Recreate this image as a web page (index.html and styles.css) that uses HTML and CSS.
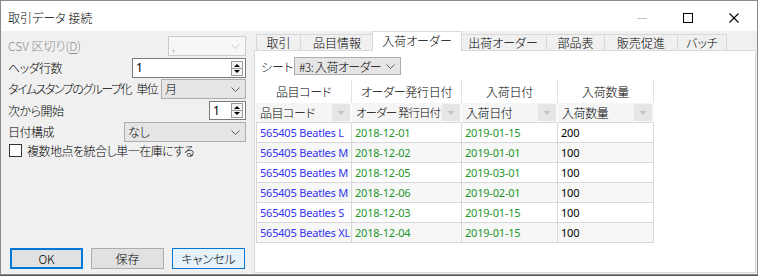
FILE: index.html
```html
<!DOCTYPE html>
<html lang="ja">
<head>
<meta charset="utf-8">
<title>取引データ 接続</title>
<link rel="stylesheet" href="styles.css">
</head>
<body>
<div class="window">
  <div class="titlebar">
    <span class="title">取引データ 接続</span>
    <div class="controls">
      <div class="ctl"><svg width="10" height="10" viewBox="0 0 10 10"><line x1="0" y1="5.5" x2="10" y2="5.5" stroke="#c4c4c4" stroke-width="1"/></svg></div>
      <div class="ctl"><svg width="10" height="10" viewBox="0 0 10 10"><rect x="0.5" y="0.5" width="9" height="9" fill="none" stroke="#000" stroke-width="1"/></svg></div>
      <div class="ctl"><svg width="10" height="10" viewBox="0 0 10 10"><path d="M0.5 0.5 L9.5 9.5 M9.5 0.5 L0.5 9.5" stroke="#000" stroke-width="1.1" fill="none"/></svg></div>
    </div>
  </div>
  <div class="body">
    <div class="left">
      <div class="form">
        <div class="row">
          <span class="label disabled">CSV 区切り(<u>D</u>)</span>
          <div class="combo combo-disabled w-csv"><span class="cval">,</span><svg class="chev" width="9" height="5" viewBox="0 0 9 5"><polyline points="0.5,0.5 4.5,4.5 8.5,0.5" fill="none" stroke="#c6c6c6"/></svg></div>
        </div>
        <div class="row">
          <span class="label">ヘッダ行数</span>
          <div class="spin w-head"><span class="sval">1</span><svg class="spinbtn" width="12" height="15" viewBox="0 0 12 15"><rect x="0.5" y="0.5" width="11" height="14" fill="#f4f4f4" stroke="#9a9a9a"/><line x1="0.5" y1="7.5" x2="11.5" y2="7.5" stroke="#9a9a9a"/><polygon points="3,6 9,6 6,3" fill="#000"/><polygon points="3,9 9,9 6,12" fill="#000"/></svg></div>
        </div>
        <div class="row r3">
          <span class="label tight">タイムスタンプのグループ化 単位</span>
          <div class="combo w-unit"><span class="cval">月</span><svg class="chev" width="9" height="5" viewBox="0 0 9 5"><polyline points="0.5,0.5 4.5,4.5 8.5,0.5" fill="none" stroke="#606060"/></svg></div>
        </div>
        <div class="row r4">
          <span class="label">次から開始</span>
          <div class="spin w-start"><span class="sval">1</span><svg class="spinbtn" width="12" height="15" viewBox="0 0 12 15"><rect x="0.5" y="0.5" width="11" height="14" fill="#f4f4f4" stroke="#9a9a9a"/><line x1="0.5" y1="7.5" x2="11.5" y2="7.5" stroke="#9a9a9a"/><polygon points="3,6 9,6 6,3" fill="#000"/><polygon points="3,9 9,9 6,12" fill="#000"/></svg></div>
        </div>
        <div class="row">
          <span class="label">日付構成</span>
          <div class="combo w-date"><span class="cval">なし</span><svg class="chev" width="9" height="5" viewBox="0 0 9 5"><polyline points="0.5,0.5 4.5,4.5 8.5,0.5" fill="none" stroke="#606060"/></svg></div>
        </div>
        <div class="row r6">
          <span class="checkbox"></span>
          <span class="label">複数地点を統合し単一在庫にする</span>
        </div>
      </div>
      <div class="buttons">
        <div class="btn btn-default">OK</div>
        <div class="btn">保存</div>
        <div class="btn btn-hover">キャンセル</div>
      </div>
    </div>
    <div class="right">
      <div class="tabs">
        <div class="tab first t1">取引</div>
        <div class="tab t2">品目情報</div>
        <div class="tab selected t3">入荷オーダー</div>
        <div class="tab t4">出荷オーダー</div>
        <div class="tab t5">部品表</div>
        <div class="tab t6">販売促進</div>
        <div class="tab t7">バッチ</div>
      </div>
      <div class="panel">
        <div class="sheet-row">
          <span class="sheet-label">シート</span>
          <div class="combo w-sheet"><span class="cval">#3: 入荷オーダー</span><svg class="chev" width="9" height="5" viewBox="0 0 9 5"><polyline points="0.5,0.5 4.5,4.5 8.5,0.5" fill="none" stroke="#606060"/></svg></div>
        </div>
        <div class="grid">
          <div class="gh">品目コード</div>
          <div class="gh">オーダー発行日付</div>
          <div class="gh">入荷日付</div>
          <div class="gh">入荷数量</div>

          <div class="fh"><span class="ftext">品目コード</span><span class="farrow"></span></div>
          <div class="fh"><span class="ftext ftight">オーダー 発行日付</span><span class="farrow"></span></div>
          <div class="fh"><span class="ftext">入荷日付</span><span class="farrow"></span></div>
          <div class="fh"><span class="ftext">入荷数量</span><span class="farrow"></span></div>

          <div class="c c1">565405 Beatles L</div><div class="c c2">2018-12-01</div><div class="c c3">2019-01-15</div><div class="c c4">200</div>
          <div class="c c1 alt">565405 Beatles M</div><div class="c c2 alt">2018-12-02</div><div class="c c3 alt">2019-01-01</div><div class="c c4 alt">100</div>
          <div class="c c1">565405 Beatles M</div><div class="c c2">2018-12-05</div><div class="c c3">2019-03-01</div><div class="c c4">100</div>
          <div class="c c1 alt">565405 Beatles M</div><div class="c c2 alt">2018-12-06</div><div class="c c3 alt">2019-02-01</div><div class="c c4 alt">100</div>
          <div class="c c1">565405 Beatles S</div><div class="c c2">2018-12-03</div><div class="c c3">2019-01-15</div><div class="c c4">100</div>
          <div class="c c1 alt">565405 Beatles XL</div><div class="c c2 alt">2018-12-04</div><div class="c c3 alt">2019-01-15</div><div class="c c4 alt">100</div>
        </div>
      </div>
    </div>
  </div>
</div>
</body>
</html>
```

FILE: styles.css
```css
* { box-sizing: border-box; }

body {
  margin: 0;
  background: #5e5048;
}

.window {
  width: 758px;
  height: 275px;
  border: 1px solid #8a8a8a;
  background: #f0f0f0;
  display: flex;
  flex-direction: column;
  font-family: "Noto Sans CJK JP", sans-serif;
  font-size: 12px;
  font-weight: 300;
  font-feature-settings: "palt";
  color: #000;
  overflow: hidden;
}

/* Title bar */
.titlebar {
  height: 30px;
  flex: none;
  background: #fff;
  display: flex;
  align-items: center;
  padding-left: 7px;
}
.title {
  padding-top: 2px;
}
.controls {
  margin-left: auto;
  display: flex;
  height: 100%;
}
.ctl {
  width: 46px;
  display: flex;
  align-items: center;
  justify-content: center;
  padding-top: 4px;
}

/* Body */
.body {
  flex: 1;
  display: flex;
  min-height: 0;
}

.left {
  width: 253px;
  flex: none;
  display: flex;
  flex-direction: column;
  padding: 5px 8px 5px 7px;
}

.form {
  display: flex;
  flex-direction: column;
}
.row {
  display: flex;
  align-items: center;
  height: 20px;
  line-height: 16px;
}
.row + .row { margin-top: 2px; }
.row.r3 { margin-top: 1px; }
.row.r4 { height: 19px; }
.row.r6 { height: 13px; }

.label {
  flex: 1;
  white-space: nowrap;
  letter-spacing: -0.5px;
}
.label.tight { letter-spacing: -1.5px; word-spacing: 4px; }
.label.disabled { color: #8d8d8d; letter-spacing: 0; }
.label u { text-decoration-thickness: 1px; text-underline-offset: 2px; }

.combo {
  height: 100%;
  display: flex;
  align-items: center;
  border: 1px solid #adadad;
  background: #e5e5e5;
  padding: 0 5px 0 3px;
  flex: none;
}
.combo .cval { flex: 1; white-space: nowrap; overflow: hidden; }
.combo-disabled {
  border-color: #cccccc;
  background: #f7f7f7;
  color: #9a9a9a;
}
.w-csv { width: 78px; }
.w-unit { width: 85px; }
.w-date { width: 122px; }
.w-sheet { width: 107px; height: 18px; padding-left: 4px; }
.w-sheet .cval { letter-spacing: -0.6px; }

.spin {
  height: 100%;
  display: flex;
  align-items: center;
  border: 1px solid #7a7a7a;
  background: #fff;
  padding: 0 2px 0 3px;
  flex: none;
}
.spin .sval { flex: 1; font-family: "Noto Sans", sans-serif; font-weight: 400; }
.w-head { width: 114px; }
.w-start { width: 37px; }

.checkbox {
  width: 13px;
  height: 13px;
  border: 1px solid #333;
  background: #fff;
  margin: 0 5px 0 1px;
  flex: none;
}

.buttons {
  margin-top: auto;
  display: flex;
  gap: 8px;
  padding-left: 2px;
}
.btn {
  width: 73px;
  height: 21px;
  border: 1px solid #adadad;
  background: #e1e1e1;
  display: flex;
  align-items: center;
  justify-content: center;
}
.btn-default { border: 2px solid #0078d7; }
.btn-hover { border-color: #0078d7; background: #e5f1fb; }

/* Right side */
.right {
  flex: 1;
  display: flex;
  flex-direction: column;
  padding: 0 1px 1px 0;
}
.tabs {
  height: 20px;
  flex: none;
  display: flex;
  align-items: flex-end;
  padding-left: 2px;
}
.tab {
  height: 17px;
  border: 1px solid #d9d9d9;
  border-left: none;
  border-bottom: none;
  background: #f0f0f0;
  display: flex;
  align-items: center;
  justify-content: center;
  white-space: nowrap;
  padding-bottom: 1px;
}
.tab.first { border-left: 1px solid #d9d9d9; }
.tab.selected {
  height: 20px;
  background: #fff;
  border-left: 1px solid #d9d9d9;
  margin: 0 -2px;
  position: relative;
  z-index: 1;
  padding-bottom: 2px;
}
.t1 { width: 45px; }
.t2 { width: 73px; }
.t3 { width: 90px; }
.t4 { width: 87px; }
.t5 { width: 58px; }
.t6 { width: 73px; }
.t7 { width: 49px; }

.panel {
  flex: 1;
  margin-top: -1px;
  border: 1px solid #d9d9d9;
  background: #fff;
  padding: 6px 0 0 1px;
}
.sheet-row {
  display: flex;
  align-items: center;
  padding-left: 5px;
}
.sheet-label {
  width: 33px;
}

/* Grid */
.grid {
  margin-top: 5px;
  display: grid;
  grid-template-columns: 96px 110px 96px 96px;
  width: 398px;
}
.gh {
  height: 23px;
  display: flex;
  align-items: center;
  justify-content: center;
  border-right: 1px solid #e3e3e3;
  padding-bottom: 1px;
  letter-spacing: -0.3px;
}
.fh {
  height: 20px;
  display: flex;
  align-items: center;
  background: #f5f5f5;
  border-right: 1px solid #fff;
  border-bottom: 1px solid #d9d9d9;
  padding: 0 1px 1px 4px;
}
.ftext { flex: 1; white-space: nowrap; letter-spacing: -0.4px; min-width: 0; overflow: hidden; }
.ftext.ftight { font-size: 11.5px; letter-spacing: -0.9px; word-spacing: 0; }
.farrow {
  width: 18px;
  height: 17px;
  margin-top: 1px;
  background: #e6e6e6;
  position: relative;
  flex: none;
}
.farrow::after {
  content: "";
  position: absolute;
  left: 5px;
  top: 7px;
  border-left: 4px solid transparent;
  border-right: 4px solid transparent;
  border-top: 4px solid #c6c6c6;
}

.c {
  height: 20px;
  display: flex;
  align-items: center;
  border-right: 1px solid #d9d9d9;
  border-bottom: 1px solid #d9d9d9;
  padding: 0 0 1px 3px;
  font-family: "Noto Sans", sans-serif;
  font-weight: 400;
  font-size: 11px;
  letter-spacing: -0.2px;
  white-space: nowrap;
  overflow: hidden;
}
.c.alt { background: #f7f7f7; }
.c1 { border-left: 1px solid #d9d9d9; color: #3333f2; }
.c2 { color: #23962a; }
.c3 { color: #23962a; }
.c4 { color: #000; }
```
